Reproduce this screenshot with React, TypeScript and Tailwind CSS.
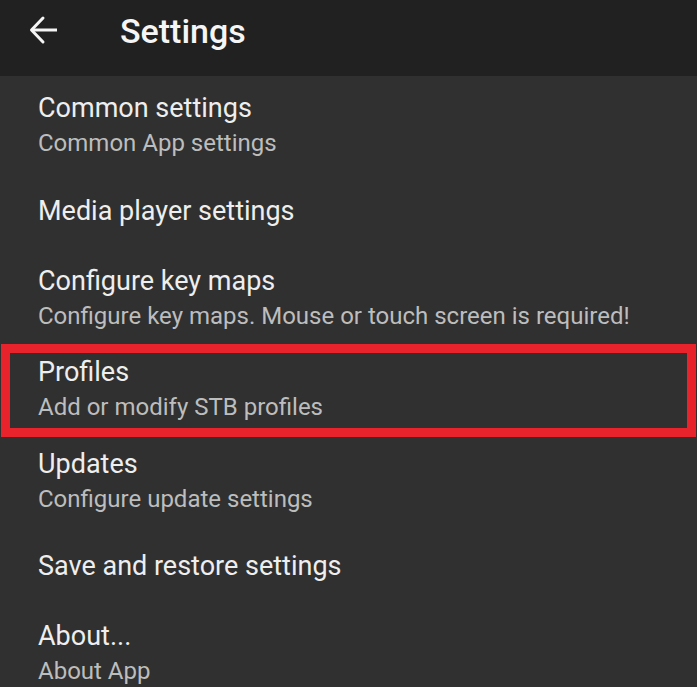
function Item({ title, sub, className }: { title: string; sub?: string; className: string }) {
  return (
    <div className={`px-[38px] ${className}`}>
      <div className="text-[27px] leading-[32px] text-[#eeeeee]">{title}</div>
      {sub && <div className="text-[24px] leading-[38px] text-[#bdbdbd]">{sub}</div>}
    </div>
  );
}

export default function App() {
  return (
    <div className="h-[687px] w-[697px] overflow-hidden bg-[#303030]" style={{ fontFamily: "Roboto, 'Noto Sans', sans-serif" }}>
      {/* Toolbar */}
      <div className="flex h-[76px] items-center bg-[#212121]">
        <div className="mb-[16px] ml-[29px] flex h-[30px] w-[30px] items-center justify-center">
          <svg width="30" height="30" viewBox="0 0 30 30" fill="none" stroke="#f5f5f5" strokeWidth="3">
            <path d="M28 15H4" strokeLinecap="butt" />
            <path d="M14 3L2.5 15L14 27" strokeLinecap="round" strokeLinejoin="round" />
          </svg>
        </div>
        <div className="ml-[61px] pb-[13px] text-[34px] font-medium text-[#f5f5f5]">Settings</div>
      </div>

      <Item title="Common settings" sub="Common App settings" className="h-[102px] pt-[16px]" />
      <Item title="Media player settings" className="h-[70px] pt-[17px]" />
      <Item title="Configure key maps" sub="Configure key maps. Mouse or touch screen is required!" className="h-[96px] pt-[17px]" />
      <div className="ml-[1px] mr-[1px] h-[93px] border-[9px] border-[#e8232b]">
        <Item title="Profiles" sub="Add or modify STB profiles" className="-ml-[10px] pt-[3px]" />
      </div>
      <Item title="Updates" sub="Configure update settings" className="h-[96px] pt-[11px]" />
      <Item title="Save and restore settings" className="h-[70px] pt-[17px]" />
      <Item title="About..." sub="About App" className="h-[84px] pt-[17px]" />
    </div>
  );
}
